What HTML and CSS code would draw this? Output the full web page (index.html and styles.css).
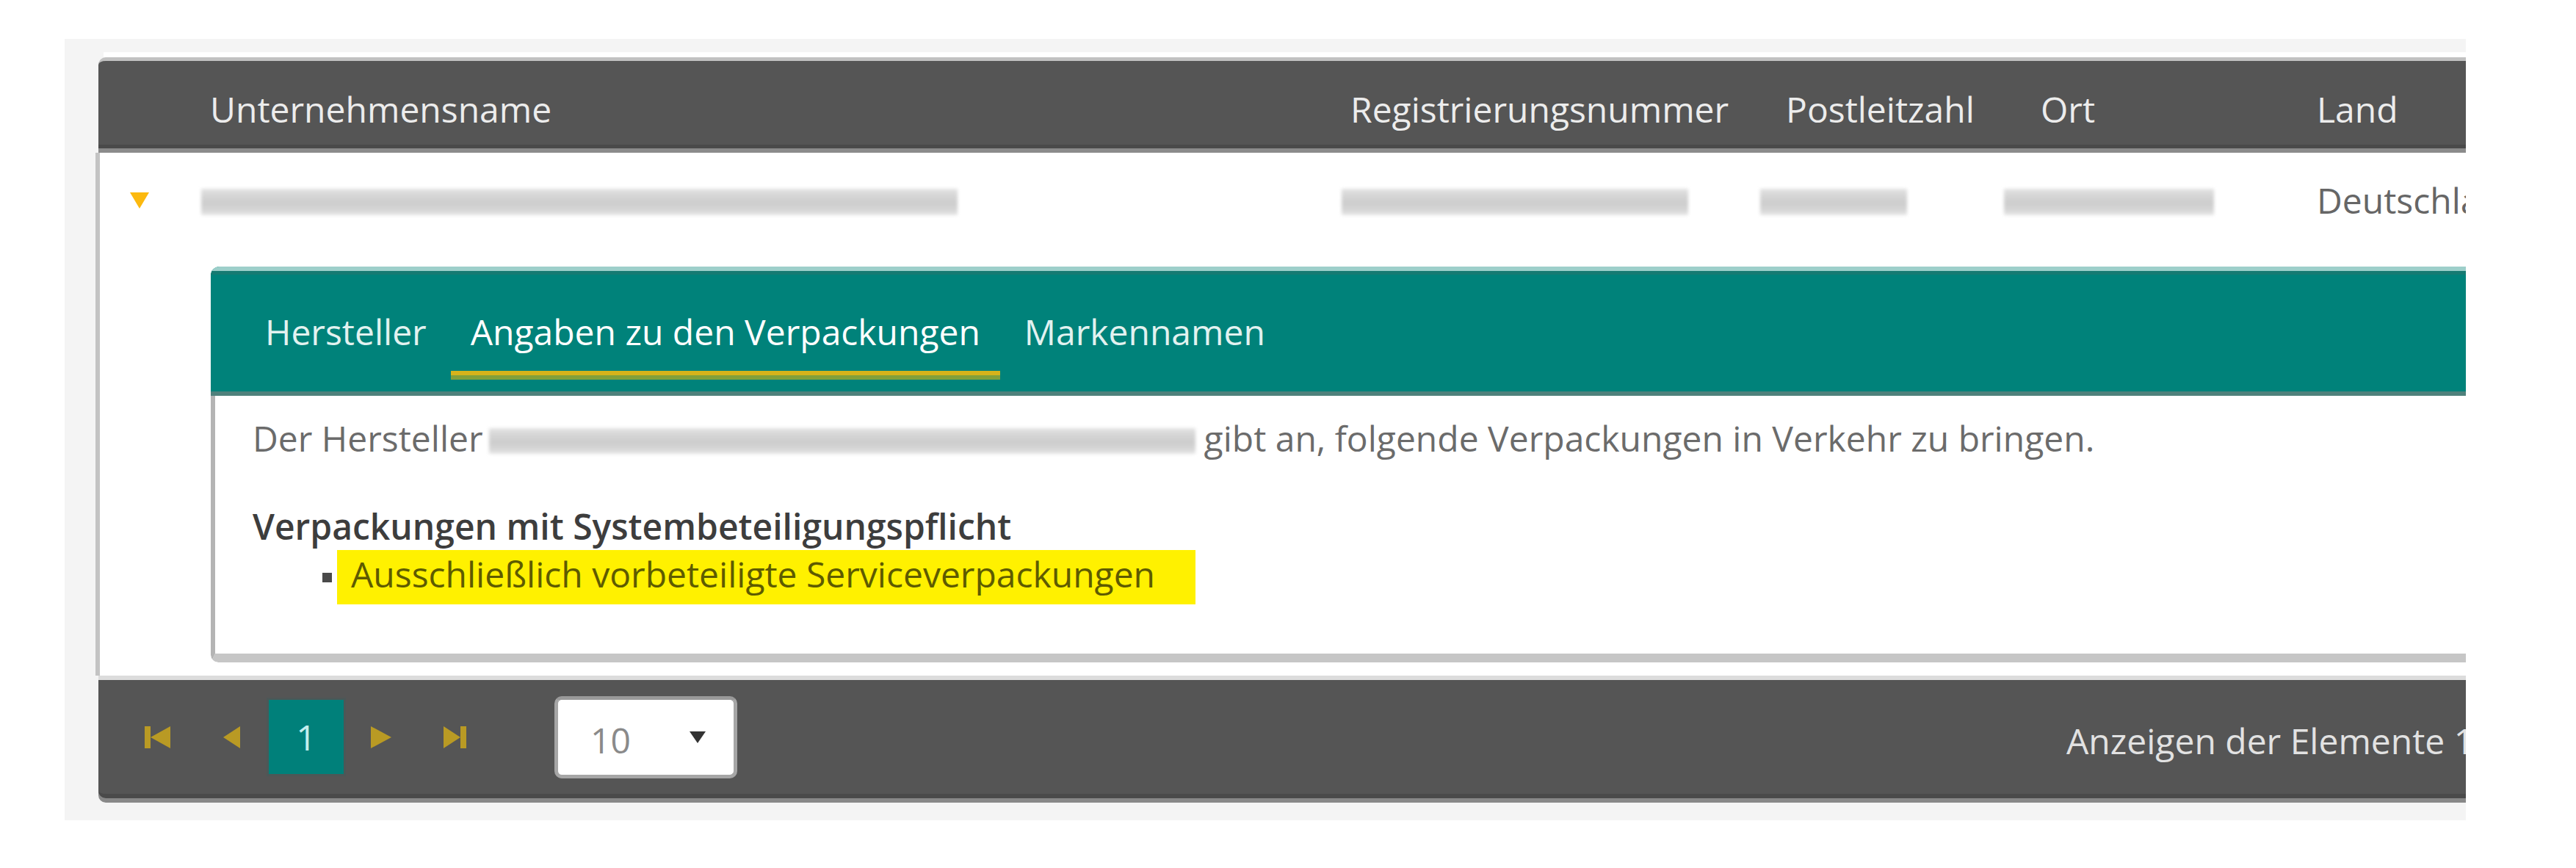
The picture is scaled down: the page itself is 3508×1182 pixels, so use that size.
FILE: index.html
```html
<!DOCTYPE html>
<html lang="de">
<head>
  <meta charset="UTF-8" />
  <meta name="viewport" content="width=device-width, initial-scale=1.0" />
  <title>Hersteller Suche</title>
  <link rel="stylesheet" href="styles.css">
</head>
<body>
  <div class="frame">
    <div class="grid">
      <div class="grid-top"></div>

      <!-- column headers -->
      <div class="grid-header cols">
        <div class="cell"></div>
        <div class="cell">Unternehmensname</div>
        <div class="cell">Registrierungsnummer</div>
        <div class="cell">Postleitzahl</div>
        <div class="cell">Ort</div>
        <div class="cell">Land</div>
      </div>

      <div class="grid-body">
        <!-- master row, values are blurred in the original -->
        <div class="row cols">
          <div class="cell">
            <svg class="expand" width="26" height="22" viewBox="0 0 26 22"><polygon points="0,0 26,0 13,22" /></svg>
          </div>
          <div class="cell"><span class="blur blur-name"></span></div>
          <div class="cell"><span class="blur blur-reg"></span></div>
          <div class="cell"><span class="blur blur-zip"></span></div>
          <div class="cell"><span class="blur blur-city"></span></div>
          <div class="cell text">Deutschland</div>
        </div>

        <!-- detail row -->
        <div class="detail">
          <div class="card">
            <div class="tabs">
              <div class="tab">Hersteller</div>
              <div class="tab active">Angaben zu den Verpackungen</div>
              <div class="tab">Markennamen</div>
            </div>
            <div class="card-body">
              <p class="intro">Der Hersteller<span class="blur blur-inline"></span>gibt an, folgende Verpackungen in Verkehr zu bringen.</p>
              <div class="group-title">Verpackungen mit Systembeteiligungspflicht</div>
              <ul class="list">
                <li><span class="mark">Ausschließlich vorbeteiligte Serviceverpackungen</span></li>
              </ul>
            </div>
          </div>
        </div>
      </div>

      <!-- pager -->
      <div class="pager">
        <div class="nav">
          <svg width="35" height="30" viewBox="0 0 35 30"><rect x="0" y="0" width="8" height="30" /><polygon points="8,15 35,0 35,30" /></svg>
        </div>
        <div class="nav">
          <svg width="23" height="30" viewBox="0 0 23 30"><polygon points="0,15 23,0 23,30" /></svg>
        </div>
        <div class="page">1</div>
        <div class="nav">
          <svg width="28" height="30" viewBox="0 0 28 30"><polygon points="0,0 28,15 0,30" /></svg>
        </div>
        <div class="nav">
          <svg width="31" height="30" viewBox="0 0 31 30"><polygon points="0,0 23,15 0,30" /><rect x="23" y="0" width="8" height="30" /></svg>
        </div>
        <div class="page-size">
          <span>10</span>
          <svg width="22" height="16" viewBox="0 0 22 16"><polygon points="0,0 22,0 11,16" /></svg>
        </div>
        <div class="info">Anzeigen der Elemente 1 - 1 von 1</div>
      </div>
    </div>
  </div>
</body>
</html>
```

FILE: styles.css
```css
/* Reset */
html, body {
  margin: 0;
  padding: 0;
  background: #fff;
  overflow: hidden;
}

body {
  font-family: "Open Sans", "Liberation Sans", sans-serif;
  font-size: 48px;
  line-height: 65px;
  color: #666;
}

/* Grey page frame, clipped on the right like the screenshot */
.frame {
  margin: 53px 0 0 88px;
  width: 3270px;
  height: 1064px;
  box-sizing: border-box;
  padding: 18px 0 0 42px;
  background: #f4f4f4;
  overflow: hidden;
}

.grid {
  width: 3500px;
}

.grid-top {
  height: 7px;
  margin-left: 11px;
  background: #fff;
}

.cols {
  display: grid;
  grid-template-columns: 134px 1553px 593px 347px 376px 400px;
}

.cell {
  white-space: nowrap;
}

/* Header */
.grid-header {
  margin: 0 0 6px 4px;
  padding: 33px 0 16px 2px;
  height: 65px;
  background: #555;
  color: #ececec;
  border-top: 5px solid #c1c1c1;
  border-bottom: 5px solid #4a4a4a;
  border-top-left-radius: 10px;
  box-shadow: 0 6px 0 #8b8b8b;
}
.grid-header .cell { padding-left: 16px; }

/* Body */
.grid-body {
  background: #fff;
  border-left: 6px solid #c3c3c3;
}

.row {
  padding-top: 32px;
  height: 65px;
}
.row .text { padding-left: 16px; color: #666; }

.expand {
  display: block;
  margin: 22px 0 0 41px;
  fill: #fcb90f;
}

/* Redacted values */
.blur {
  display: block;
  height: 36px;
  margin-top: 17px;
  background: linear-gradient(180deg, #e4e4e4 0%, #d6d6d6 25%, #cdcdcd 55%, #d6d6d6 80%, #e6e6e6 100%);
  filter: blur(2px);
}
.blur-name { width: 1030px; margin-left: 4px; }
.blur-reg { width: 472px; margin-left: 4px; }
.blur-zip { width: 200px; margin-left: -19px; }
.blur-city { width: 286px; margin-left: -34px; }
.blur-inline {
  display: inline-block;
  width: 962px;
  height: 35px;
  margin: 0 12px 0 8px;
  vertical-align: -3px;
}

/* Detail card */
.detail {
  padding: 58px 0 18px 151px;
}

.card {
  width: 3300px;
  border-top-left-radius: 12px;
  border-bottom-left-radius: 10px;
  overflow: hidden;
}

.tabs {
  display: flex;
  gap: 6px;
  padding: 0 0 16px 47px;
  background: #00827a;
  border-top: 6px solid #9dcfca;
  border-bottom: 6px solid #4f817c;
  box-shadow: inset 0 5px 0 #167a72;
}

.tab {
  padding: 50px 27px 27px;
  border-bottom: 6px solid transparent;
  color: #e2f2f0;
  white-space: nowrap;
}
.tab.active {
  color: #fff;
  border-bottom-color: #83a03a;
  box-shadow: inset 0 -6px 0 #d6b31b;
}

.card-body {
  padding: 25px 0 67px 51px;
  background: #fff;
  border-left: 6px solid #b4b4b4;
  border-bottom: 12px solid #c6c6c6;
  border-bottom-left-radius: 10px;
}

.intro {
  margin: 0 0 55px;
  color: #6b6b6b;
  white-space: nowrap;
}

.group-title {
  font-weight: 600;
  color: #3d3d3d;
}

.list {
  margin: 0;
  padding-left: 95px;
  list-style: none;
}
.list li::before {
  content: "";
  display: inline-block;
  width: 13px;
  height: 13px;
  margin-right: 7px;
  vertical-align: 7px;
  background: #4a4a4a;
}

.mark {
  display: inline-block;
  padding: 0 55px 9px 19px;
  background: #fff100;
  color: #5e5b00;
}

/* Pager */
.pager {
  display: flex;
  align-items: center;
  margin-left: 4px;
  padding-left: 30px;
  height: 155px;
  background: #555;
  border-top: 6px solid #dcdcdc;
  border-bottom: 6px solid #4a4a4a;
  border-bottom-left-radius: 10px;
  box-shadow: 0 6px 0 #888;
}

.nav {
  display: flex;
  justify-content: center;
  width: 101px;
}
.nav svg { fill: #b99a24; }

.page {
  width: 102px;
  height: 101px;
  line-height: 101px;
  text-align: center;
  background: #00807a;
  color: #c4eeee;
  box-shadow: 0 0 0 3px #4c5757;
}

.page-size {
  display: flex;
  align-items: center;
  box-sizing: border-box;
  width: 249px;
  height: 112px;
  margin-left: 85px;
  padding: 7px 0 0 44px;
  background: #fff;
  border: 5px solid #a6a6a6;
  border-top-color: #999;
  border-radius: 10px;
  color: #8a8a8a;
}
.page-size svg {
  margin: -7px 0 0 80px;
  fill: #333;
}

.info {
  margin-left: 1810px;
  padding-top: 10px;
  color: #e2e2e2;
  white-space: nowrap;
}
```
